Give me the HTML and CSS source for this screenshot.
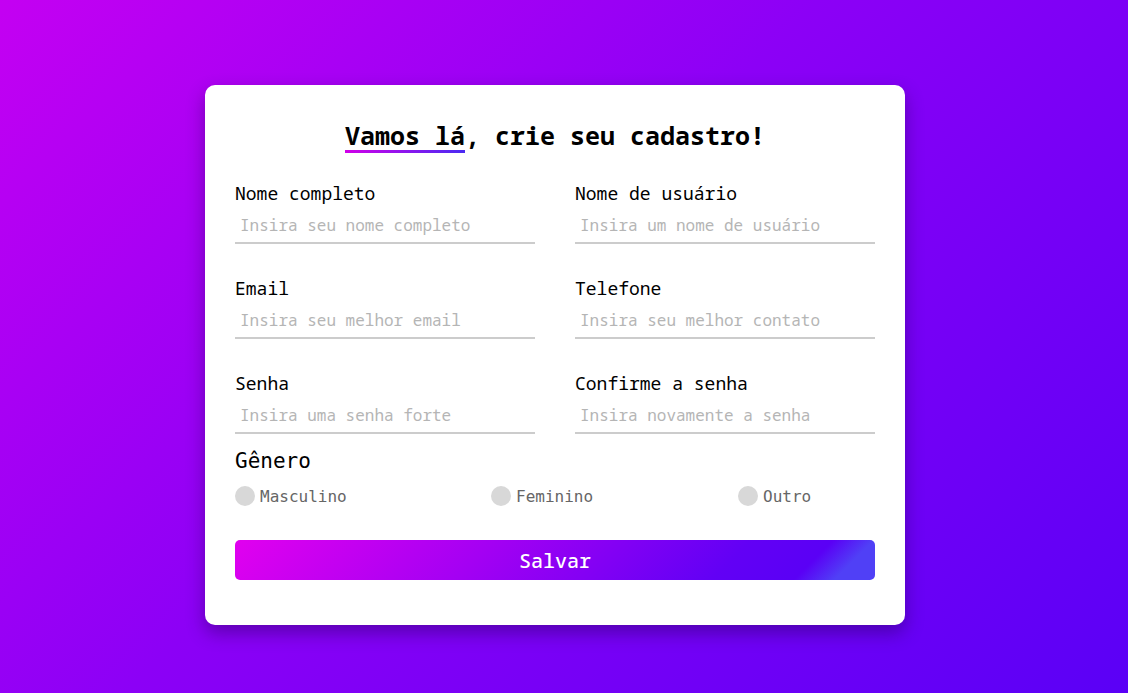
FILE: index.html
```html
<!DOCTYPE html>
<html lang="pt-BR">
<head>
<meta charset="utf-8">
<title>Cadastro</title>
<link rel="stylesheet" href="styles.css">
</head>
<body>
<main class="page">
  <form class="card">
    <h1 class="title"><span class="title-mark">Vamos lá</span>, crie seu cadastro!</h1>
    <div class="fields">
      <div class="field">
        <label class="label">Nome completo</label>
        <input class="input" type="text" placeholder="Insira seu nome completo">
      </div>
      <div class="field">
        <label class="label">Nome de usuário</label>
        <input class="input" type="text" placeholder="Insira um nome de usuário">
      </div>
      <div class="field">
        <label class="label">Email</label>
        <input class="input" type="text" placeholder="Insira seu melhor email">
      </div>
      <div class="field">
        <label class="label">Telefone</label>
        <input class="input" type="text" placeholder="Insira seu melhor contato">
      </div>
      <div class="field">
        <label class="label">Senha</label>
        <input class="input" type="text" placeholder="Insira uma senha forte">
      </div>
      <div class="field">
        <label class="label">Confirme a senha</label>
        <input class="input" type="text" placeholder="Insira novamente a senha">
      </div>
    </div>
    <div class="gender">
      <div class="gender-title">Gênero</div>
      <div class="options">
        <label class="option opt-1"><span class="radio"></span>Masculino</label>
        <label class="option opt-2"><span class="radio"></span>Feminino</label>
        <label class="option"><span class="radio"></span>Outro</label>
      </div>
    </div>
    <button class="save" type="button">Salvar</button>
  </form>
</main>
</body>
</html>
```
FILE: styles.css
```css
* { box-sizing: border-box; }
html, body { margin: 0; height: 100%; }
body {
  font-family: "Noto Sans Mono", "DejaVu Sans Mono", monospace;
  background: linear-gradient(135deg, #c400f2 0%, #8c00f6 45%, #5a00f6 100%);
}
.page {
  height: 693px;
  display: flex;
  justify-content: center;
  align-items: flex-start;
  padding-top: 85px;
  padding-right: 18px;
}
.card {
  width: 700px;
  height: 540px;
  background: #fff;
  border-radius: 10px;
  box-shadow: 0 8px 18px rgba(40, 0, 90, 0.45);
  padding: 30px 30px 0;
}
.title {
  margin: 0 0 26px;
  text-align: center;
  font-size: 25px;
  font-weight: 700;
  line-height: 40px;
  color: #000;
}
.title-mark {
  position: relative;
}
.title-mark::after {
  content: "";
  position: absolute;
  left: 0;
  right: 0;
  bottom: -1px;
  height: 3px;
  background: linear-gradient(to right, #d000e8, #4a2af2);
}
.fields {
  display: grid;
  grid-template-columns: 300px 300px;
  column-gap: 40px;
  row-gap: 32px;
}
.field {
  display: flex;
  flex-direction: column;
}
.label {
  font-size: 18px;
  line-height: 24px;
  color: #000;
}
.input {
  border: none;
  border-bottom: 2px solid #cccccc;
  font-family: inherit;
  font-size: 16px;
  padding: 3px 5px 0;
  outline: none;
  height: 39px;
}
.input::placeholder { color: #b5b5b5; }
.gender { margin-top: 15px; }
.gender-title {
  font-family: "DejaVu Sans Mono", monospace;
  font-size: 21px;
  line-height: 24px;
}
.options {
  display: flex;
  margin-top: 13px;
}
.option {
  display: flex;
  align-items: center;
  gap: 5px;
  font-family: "DejaVu Sans Mono", monospace;
  font-size: 16px;
  color: #666;
}
.opt-1 { width: 256px; }
.opt-2 { width: 247px; }
.radio {
  width: 20px;
  height: 20px;
  border-radius: 50%;
  background: #d8d8d8;
}
.save {
  display: block;
  width: 100%;
  height: 40px;
  margin-top: 34px;
  border: none;
  border-radius: 5px;
  color: #fff;
  font-family: inherit;
  font-size: 20px;
  font-weight: 500;
  background: linear-gradient(135deg, #e100ef 0%, #a400f3 38%, #6200f5 76%, #5a00f5 88%, #5040f6 94%, #5040f6 100%);
}
```
